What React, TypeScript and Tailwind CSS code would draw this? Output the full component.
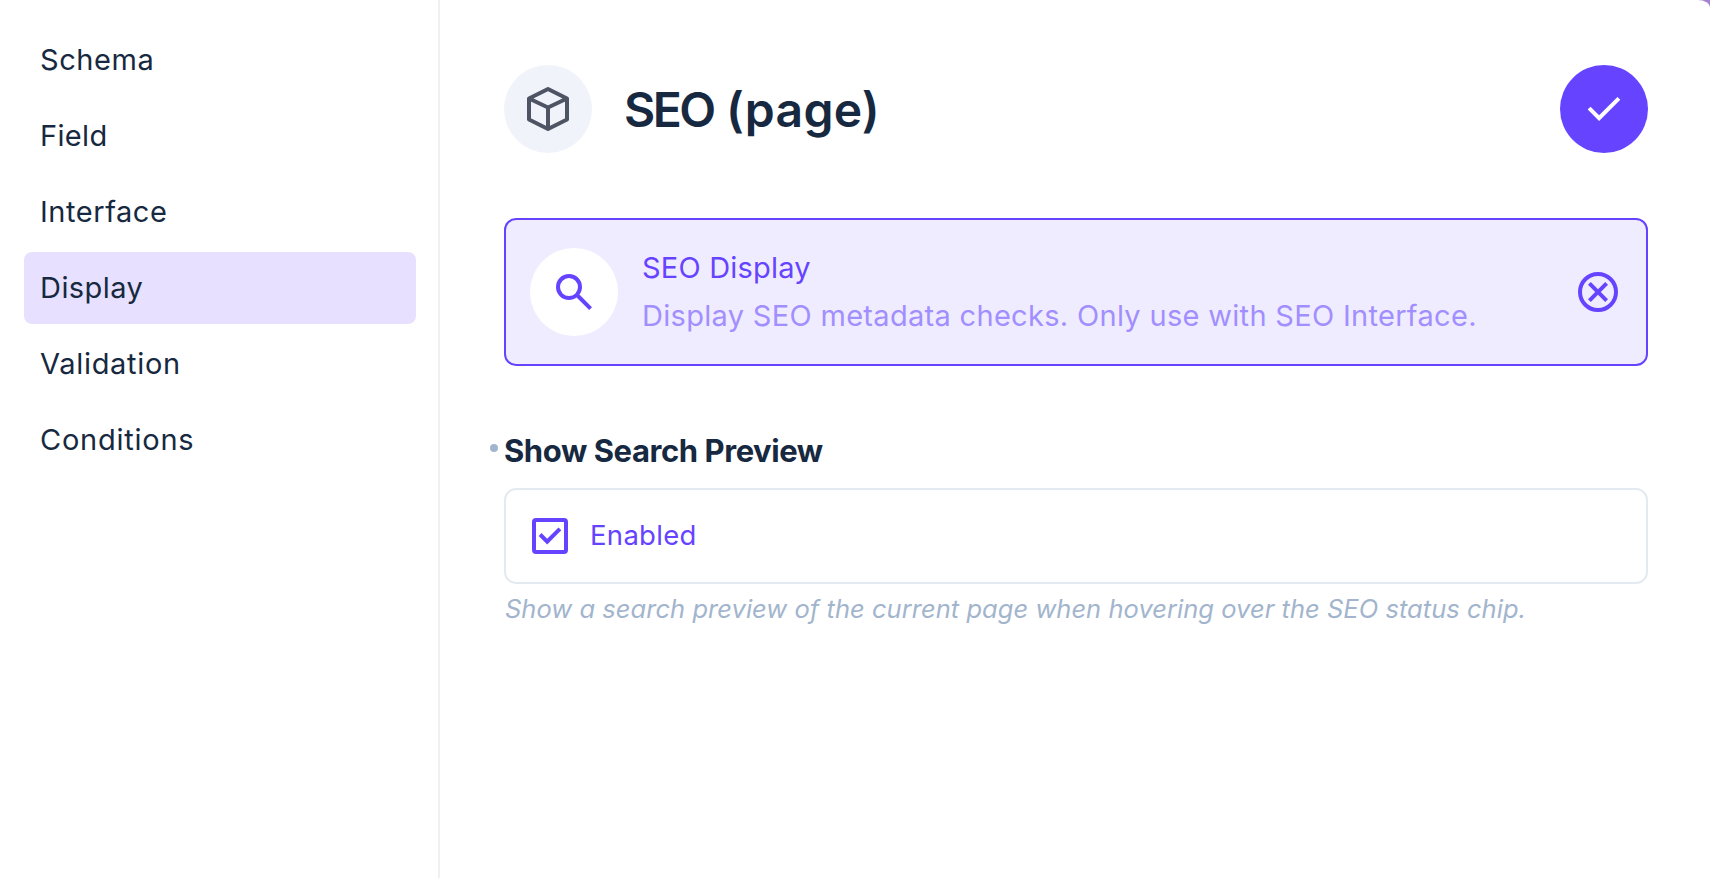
import React from "react";

const CHECK = "M382-240 154-468l57-57 171 171 367-367 57 57-424 424Z";

const nav = [
  { name: "Schema", tracking: "tracking-[0.55px]" },
  { name: "Field", tracking: "tracking-[0.35px]" },
  { name: "Interface", tracking: "tracking-[0.55px]" },
  { name: "Display", tracking: "tracking-[0.45px]" },
  { name: "Validation", tracking: "tracking-[0.7px]" },
  { name: "Conditions", tracking: "tracking-[0.75px]" },
];

export default function App() {
  return (
    <div className="h-[878px] w-[1710px] overflow-hidden bg-[#a67fd0] font-['Inter',sans-serif] text-[#172940]">
      <div className="flex h-full rounded-tr-[12px_8px] bg-white">
        <nav className="flex w-[440px] shrink-0 flex-col gap-1 border-r-2 border-[#f0f0f2] px-6 pt-6">
          {nav.map(({ name, tracking }) => (
            <a
              key={name}
              className={`flex h-[72px] w-[392px] shrink-0 items-center rounded-lg px-4 text-[29px] leading-[42px] ${tracking} ${name === "Display" ? "bg-[#e7e1ff]" : ""}`}
            >
              <span>{name}</span>
            </a>
          ))}
        </nav>
        <main className="flex w-[1270px] flex-col pl-16 pr-[62px] pt-[65px]">
          <header className="flex items-center">
            <div className="flex size-[88px] items-center justify-center rounded-full bg-[#f0f3fa]">
              <svg className="size-12" viewBox="0 0 48 48" fill="none" stroke="#4f5464" strokeWidth="4" strokeLinejoin="round">
                <path d="M24 4 43 13.500V34.500L24 44 5 34.500V13.500ZM5 13.500 24 22.500 43 13.500M24 22.500V44" />
              </svg>
            </div>
            <h1 className="ml-8 pt-0.5 text-[48px] font-semibold leading-none tracking-[0.3px]">
              <span className="tracking-[-2.5px]">SEO</span> (page)
            </h1>
            <button className="ml-auto flex size-[88px] items-center justify-center rounded-full bg-[#6644ff]">
              <svg className="size-12" viewBox="0 -960 960 960" fill="white">
                <path d={CHECK} />
              </svg>
            </button>
          </header>
          <section className="mt-[65px] flex h-[148px] shrink-0 items-center rounded-[12px] border-2 border-[#6644ff] bg-[#f0ecff] px-6">
            <div className="flex size-[88px] shrink-0 items-center justify-center rounded-full bg-white">
              <svg className="size-12" viewBox="0 -960 960 960" fill="#6644ff">
                <path d="M784-120 532-372q-30 24-69 38t-83 14q-109 0-184.500-75.500T120-580q0-109 75.500-184.500T380-840q109 0 184.500 75.500T640-580q0 44-14 83t-38 69l252 252-56 56ZM380-400q75 0 127.500-52.500T560-580q0-75-52.500-127.500T380-760q-75 0-127.500 52.500T200-580q0 75 52.500 127.500T380-400Z" />
              </svg>
            </div>
            <div className="ml-6 whitespace-nowrap text-[29px] leading-[48px]">
              <div className="tracking-[0.2px] text-[#6644ff]">
                <span>SEO Display</span>
              </div>
              <div className="tracking-[0.31px] text-[#a18fff]">
                <span>Display SEO metadata checks. Only use with SEO Interface.</span>
              </div>
            </div>
            <svg className="ml-auto size-12 shrink-0" viewBox="0 -960 960 960" fill="#6644ff">
              <circle cx="480" cy="-480" r="360" fill="none" stroke="#6644ff" strokeWidth="80" />
              <path d="m336-280 144-144 144 144 56-56-144-144 144-144-56-56-144 144-144-144-56 56 144 144-144 144 56 56Z" />
            </svg>
          </section>
          <div className="relative mt-[61px] h-[48px] text-[31px] font-bold leading-[48px] tracking-[-0.43px]">
            <i className="absolute -left-[14px] top-[17px] size-2 rounded-full bg-[#a2b5cd]" />
            <span>Show Search Preview</span>
          </div>
          <div className="mt-[13px] flex h-[96px] items-center rounded-[12px] border-2 border-[#e4eaf1] pl-5 text-[27.500px] tracking-[0.3px] text-[#6644ff]">
            <svg className="size-12" viewBox="0 -960 960 960" fill="#6644ff">
              <rect x="160" y="-800" width="640" height="640" rx="40" fill="none" stroke="#6644ff" strokeWidth="80" />
              <path d="m424-312 282-282-56-56-226 226-114-114-56 56 170 170Z" />
            </svg>
            <span className="ml-4">Enabled</span>
          </div>
          <p className="mt-1.5 whitespace-nowrap pl-px text-[25.500px] italic leading-[38px] tracking-[0.035px] text-[#a2b5cd]">
            <span>Show a search preview of the current page when hovering over the SEO status chip.</span>
          </p>
        </main>
      </div>
    </div>
  );
}
